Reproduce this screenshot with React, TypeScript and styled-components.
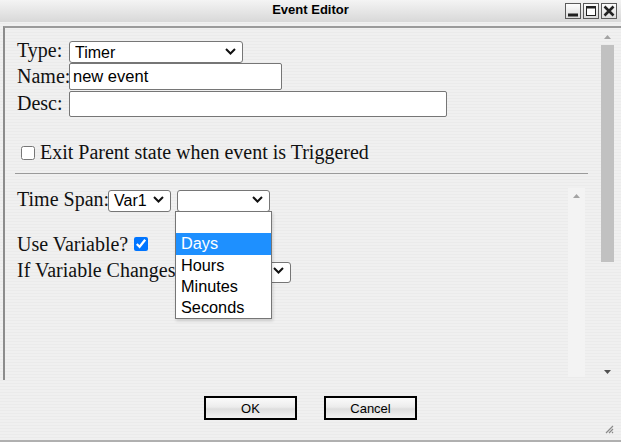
import React from 'react';
import styled, { createGlobalStyle } from 'styled-components';

const Global = createGlobalStyle`
  html, body { margin: 0; padding: 0; background: #efefef; }
  body { width: 621px; height: 442px; overflow: hidden; }
  * { box-sizing: border-box; }
`;

const Window = styled.div`
  width: 621px;
  height: 442px;
  display: flex;
  flex-direction: column;
  background: repeating-linear-gradient(180deg, #f0f0f0 0 2px, #ebebeb 2px 3px);
  border-bottom: 2px solid #b0b0b0;
  font-family: "Liberation Serif", "Times New Roman", serif;
  color: #111;
  position: relative;
`;

const TitleBar = styled.div`
  height: 22px;
  display: grid;
  grid-template-columns: 1fr auto 1fr;
  align-items: center;
  background: linear-gradient(#f4f4f4, #d8d8d8);
  font: bold 13px "Liberation Sans", Arial, sans-serif;
  color: #000;
`;

const Title = styled.div`
  grid-column: 2;
  margin-top: -3px;
`;

const TitleButtons = styled.div`
  grid-column: 3;
  justify-self: end;
  display: flex;
  gap: 2px;
  margin-right: 4px;
  margin-top: -1px;
`;

const TitleBtn = styled.div`
  width: 16px;
  height: 16px;
  border: 1px solid #5a5a5a;
  background: linear-gradient(#fdfdfd, #dcdcdc);
  display: flex;
  align-items: center;
  justify-content: center;
`;

const Frame = styled.div`
  margin-top: 4px;
  margin-left: 3px;
  height: 354px;
  border-top: 2px solid #9a9a9a;
  border-left: 2px solid #8c8c8c;
  display: flex;
`;

const Main = styled.div`
  flex: 1;
  padding: 11px 12px 0 10px;
  display: flex;
  flex-direction: column;
  min-width: 0;
`;

const Row = styled.div<{ $h: number; $mt?: number }>`
  height: ${p => p.$h}px;
  margin-top: ${p => p.$mt ?? 0}px;
  display: flex;
  align-items: center;
  padding-left: 2px;
  font-size: 20px;
  white-space: nowrap;
`;

const Label = styled.span<{ $w?: number }>`
  display: inline-block;
  flex-shrink: 0;
  overflow: visible;
  width: ${p => (p.$w ? `${p.$w}px` : 'auto')};
`;

const SelectWrap = styled.span<{ $w: number; $h?: number; $ml?: number }>`
  position: relative;
  display: inline-block;
  flex-shrink: 0;
  width: ${p => p.$w}px;
  height: ${p => p.$h ?? 22}px;
  margin-left: ${p => p.$ml ?? 0}px;
`;

const Select = styled.select`
  appearance: none;
  -webkit-appearance: none;
  width: 100%;
  height: 100%;
  border: 1px solid #767676;
  border-radius: 3px;
  background: #fff;
  font: 16px "Liberation Sans", Arial, sans-serif;
  color: #000;
  padding: 0 0 0 5px;
  margin: 0;
  outline: none;
`;

const Chevron = styled.svg`
  position: absolute;
  right: 7px;
  top: 50%;
  margin-top: -3px;
  width: 11px;
  height: 7px;
  pointer-events: none;
`;

const TextInput = styled.input<{ $w: number; $h: number }>`
  width: ${p => p.$w}px;
  height: ${p => p.$h}px;
  flex-shrink: 0;
  border: 1px solid #767676;
  border-radius: 2px;
  background: #fff;
  font: 16.5px "Liberation Sans", Arial, sans-serif;
  color: #000;
  padding: 0 3px;
  margin: 0;
  outline: none;
`;

const Check = styled.input<{ $ml: number; $mr: number }>`
  width: 14px;
  height: 14px;
  flex-shrink: 0;
  margin: 0 ${p => p.$mr}px 0 ${p => p.$ml}px;
`;

const Rule = styled.div`
  height: 1px;
  background: #9a9a9a;
  margin: 8px 0 0 0;
`;

const Inner = styled.div`
  flex: 1;
  display: flex;
  margin-top: 9px;
  margin-right: 3px;
`;

const InnerContent = styled.div`
  flex: 1;
  display: flex;
  flex-direction: column;
  padding-top: 5px;
`;

const InnerTrack = styled.div`
  width: 17px;
  margin-top: 5px;
  margin-bottom: 3px;
  background: #f3f3f3;
  display: flex;
  justify-content: center;
  padding-top: 6px;
`;

const Popup = styled.ul`
  position: absolute;
  left: -2px;
  top: 23px;
  width: 97px;
  margin: 0;
  padding: 0;
  list-style: none;
  background: #fff;
  border: 1px solid #767676;
  box-shadow: 1px 2px 3px rgba(0, 0, 0, 0.15);
  z-index: 5;
  font: 16.3px "Liberation Sans", Arial, sans-serif;
`;

const Option = styled.li<{ $active?: boolean }>`
  height: 21.3px;
  line-height: 21.3px;
  padding-left: 5px;
  background: ${p => (p.$active ? '#1e90ff' : '#fff')};
  color: ${p => (p.$active ? '#fff' : '#000')};
`;

const OuterScroll = styled.div`
  width: 21px;
  display: flex;
  flex-direction: column;
  align-items: flex-start;
  padding-left: 1px;
`;

const ArrowBox = styled.div`
  width: 13px;
  height: 17px;
  display: flex;
  align-items: center;
  justify-content: center;
`;

const Thumb = styled.div`
  width: 13px;
  height: 217px;
  background: #c1c1c1;
`;

const ScrollSpacer = styled.div`
  flex: 1;
`;

const Footer = styled.div`
  flex: 1;
  display: flex;
  justify-content: center;
  align-items: flex-start;
  gap: 27px;
  padding-top: 16px;
  position: relative;
`;

const Button = styled.button`
  width: 93px;
  height: 24px;
  border: 2px solid #000;
  background: linear-gradient(#fbfbfb, #ececec 45%, #dedede 55%, #f2f2f2);
  font: 13px "Liberation Sans", Arial, sans-serif;
  color: #000;
  padding: 0;
  margin: 0;
`;

const Grip = styled.svg`
  position: absolute;
  right: 7px;
  bottom: 6px;
  width: 10px;
  height: 10px;
`;

const ChevronIcon = () => (
  <Chevron viewBox="0 0 11 7">
    <path d="M1 1 L5.5 5.5 L10 1" fill="none" stroke="#111" strokeWidth="2" />
  </Chevron>
);

const Sel: React.FC<{ w: number; h?: number; ml?: number; value?: string; children?: React.ReactNode }> = ({ w, h, ml, value, children }) => (
  <SelectWrap $w={w} $h={h} $ml={ml}>
    <Select defaultValue={value ?? ''}>
      <option value={value ?? ''}>{value ?? ''}</option>
    </Select>
    <ChevronIcon />
    {children}
  </SelectWrap>
);

export default function App() {
  return (
    <>
      <Global />
      <Window>
        <TitleBar>
          <Title>Event Editor</Title>
          <TitleButtons>
            <TitleBtn>
              <svg width="12" height="12" viewBox="0 0 12 12">
                <rect x="1" y="8.5" width="10" height="3" fill="#222" />
              </svg>
            </TitleBtn>
            <TitleBtn>
              <svg width="12" height="12" viewBox="0 0 12 12">
                <rect x="1.5" y="1.5" width="9" height="9" fill="#fff" stroke="#222" strokeWidth="1" />
                <rect x="1" y="1" width="10" height="2.5" fill="#222" />
              </svg>
            </TitleBtn>
            <TitleBtn>
              <svg width="12" height="12" viewBox="0 0 12 12">
                <path d="M1.5 1.5 L10.5 10.5 M10.5 1.5 L1.5 10.5" stroke="#222" strokeWidth="2.6" />
              </svg>
            </TitleBtn>
          </TitleButtons>
        </TitleBar>

        <Frame>
          <Main>
            <Row $h={23}>
              <Label $w={52}>Type:</Label>
              <Sel w={174} value="Timer" />
            </Row>
            <Row $h={28}>
              <Label $w={52}>Name:</Label>
              <TextInput $w={213} $h={27} defaultValue="new event" />
            </Row>
            <Row $h={27}>
              <Label $w={52}>Desc:</Label>
              <TextInput $w={378} $h={26} defaultValue="" />
            </Row>
            <Row $h={25} $mt={23}>
              <Check type="checkbox" $ml={4} $mr={5} />
              <span>Exit Parent state when event is Triggered</span>
            </Row>
            <Rule />
            <Inner>
              <InnerContent>
                <Row $h={22}>
                  <Label $w={91}>Time Span:</Label>
                  <Sel w={63} value="Var1" />
                  <Sel w={93} ml={6}>
                    <Popup>
                      <Option>&nbsp;</Option>
                      <Option $active>Days</Option>
                      <Option>Hours</Option>
                      <Option>Minutes</Option>
                      <Option>Seconds</Option>
                    </Popup>
                  </Sel>
                </Row>
                <Row $h={22} $mt={23}>
                  <span>Use Variable?</span>
                  <Check type="checkbox" defaultChecked $ml={6} $mr={0} />
                </Row>
                <Row $h={22} $mt={4}>
                  <Label $w={156}>If Variable Changes:</Label>
                  <Sel w={114} ml={4} h={21} />
                </Row>
              </InnerContent>
              <InnerTrack>
                <svg width="7" height="4" viewBox="0 0 7 4">
                  <path d="M0 4 L3.5 0 L7 4 Z" fill="#a3a3a3" />
                </svg>
              </InnerTrack>
            </Inner>
          </Main>
          <OuterScroll>
            <ArrowBox>
              <svg width="7" height="4" viewBox="0 0 7 4">
                <path d="M0 4 L3.5 0 L7 4 Z" fill="#a3a3a3" />
              </svg>
            </ArrowBox>
            <Thumb />
            <ScrollSpacer />
            <ArrowBox>
              <svg width="7" height="4" viewBox="0 0 7 4">
                <path d="M0 0 L7 0 L3.5 4 Z" fill="#505050" />
              </svg>
            </ArrowBox>
          </OuterScroll>
        </Frame>

        <Footer>
          <Button>OK</Button>
          <Button>Cancel</Button>
          <Grip viewBox="0 0 10 10">
            <path d="M9 2 L2 9 M9 5 L5 9 M9 8 L8 9" stroke="#8a8a8a" strokeWidth="1.2" />
          </Grip>
        </Footer>
      </Window>
    </>
  );
}
